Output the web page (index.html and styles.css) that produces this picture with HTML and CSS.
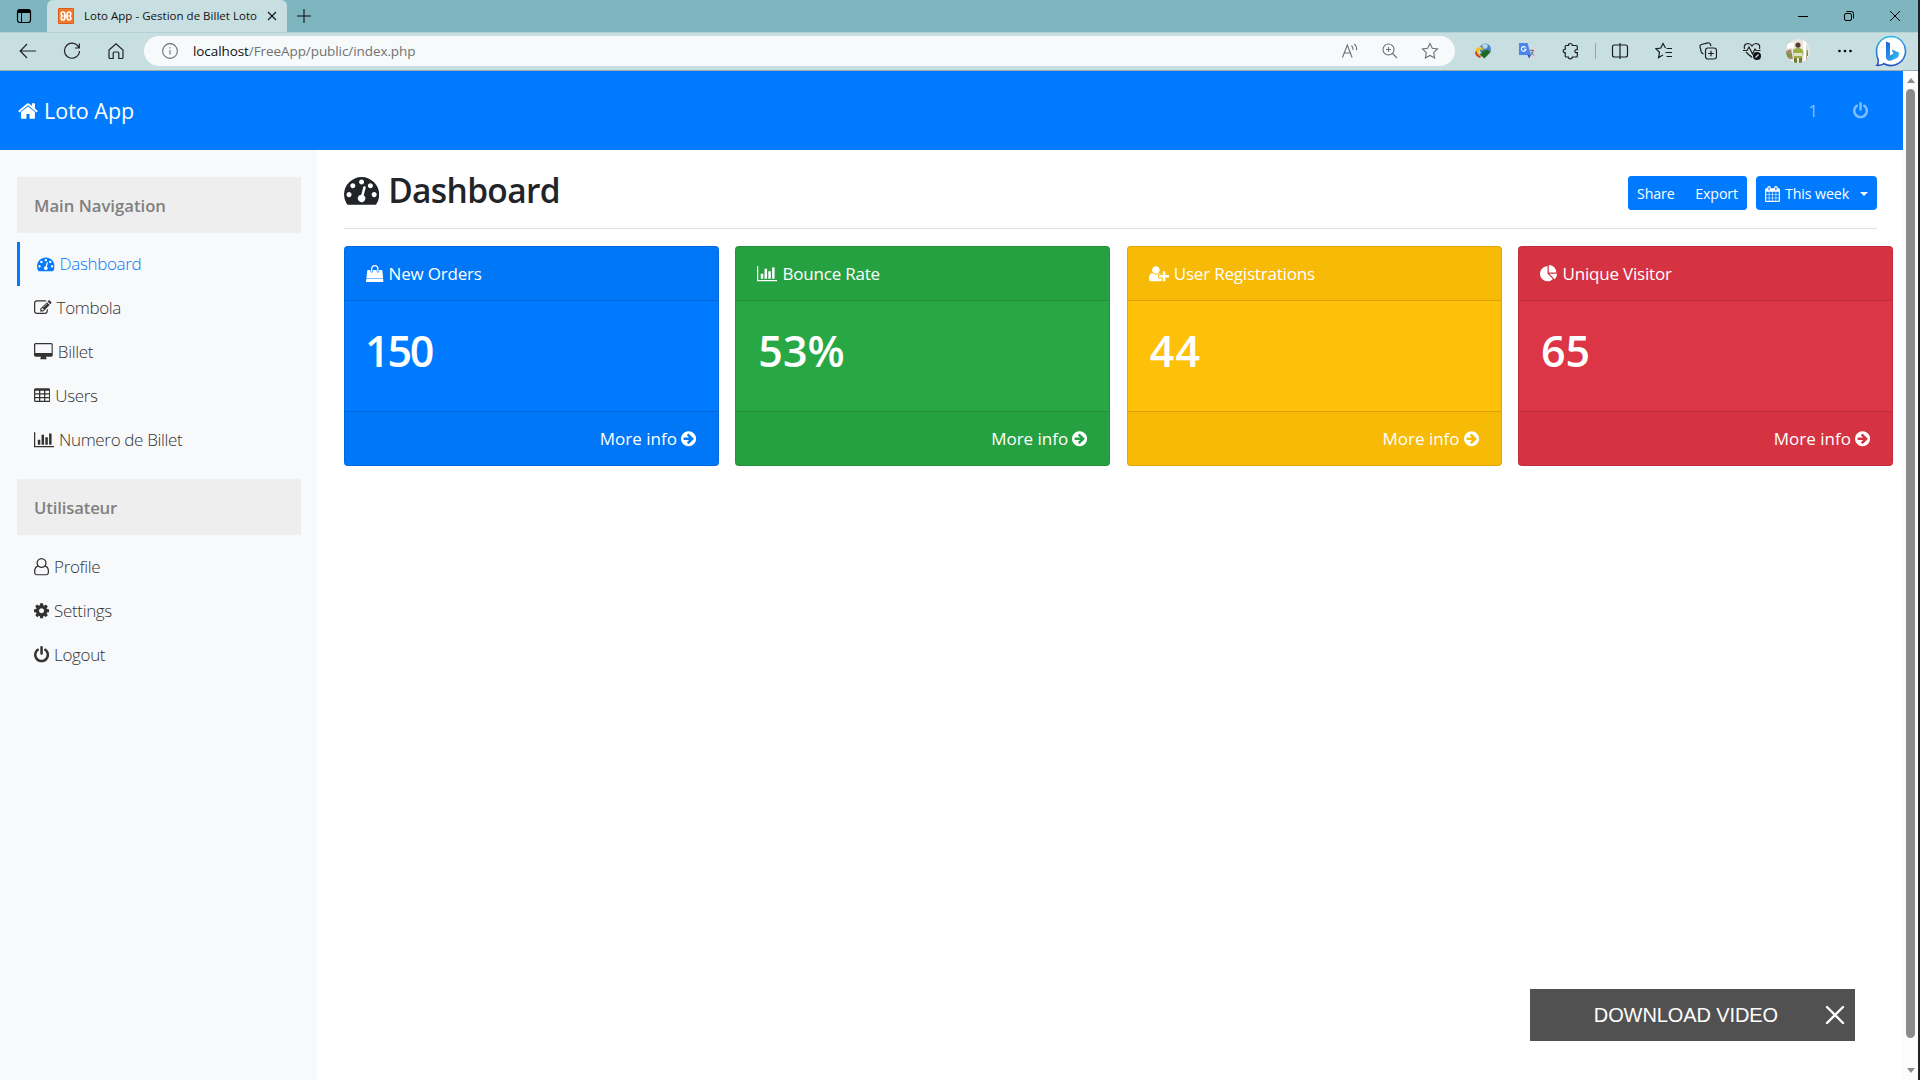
FILE: index.html
```html
<!DOCTYPE html>
<html lang="fr">
<head>
<meta charset="utf-8">
<title>Loto App - Gestion de Billet Loto</title>
<link rel="stylesheet" href="styles.css">
</head>
<body>
<svg class="sprite" aria-hidden="true">
  <symbol id="home" viewBox="64 0 1664 1792"><path d="M1472 992v480q0 26-19 45t-45 19h-384v-384h-256v384h-384q-26 0-45-19t-19-45v-480q0-1 .5-3t.5-3l575-474 575 474q1 2 1 6zm223-69l-62 74q-8 9-21 11h-3q-13 0-21-7l-692-577-692 577q-12 8-24 7-13-2-21-11l-62-74q-8-10-7-23.5t11-21.5l719-599q32-26 76-26t76 26l244 204v-195q0-14 9-23t23-9h192q14 0 23 9t9 23v408l219 182q10 8 11 21.500t-7 23.500z"/></symbol>
  <symbol id="gauge" viewBox="0 0 1792 1792"><path d="M384 1152q0-53-37.500-90.500t-90.500-37.500-90.500 37.500-37.500 90.500 37.500 90.500 90.500 37.500 90.500-37.500 37.500-90.500zm192-448q0-53-37.500-90.500t-90.500-37.500-90.500 37.500-37.500 90.500 37.500 90.500 90.500 37.500 90.500-37.500 37.500-90.500zm428 481l101-382q6-26-7.500-48.500t-38.500-29.500-48 6.500-30 39.500l-101 382q-60 5-107 43.500t-63 98.500q-20 77 20 146t117 89 146-20 89-117q16-60-6-117t-72-91zm660-33q0-53-37.500-90.500t-90.500-37.500-90.500 37.500-37.500 90.500 37.500 90.500 90.500 37.500 90.500-37.500 37.500-90.500zm-640-640q0-53-37.500-90.500t-90.500-37.500-90.500 37.500-37.500 90.500 37.500 90.500 90.500 37.500 90.500-37.500 37.500-90.500zm448 192q0-53-37.500-90.500t-90.500-37.500-90.500 37.500-37.500 90.500 37.500 90.500 90.500 37.500 90.500-37.500 37.500-90.500zm320 448q0 261-141 483-19 29-54 29h-1402q-35 0-54-29-141-221-141-483 0-182 71-348t191-286 286-191 348-71 348 71 286 191 191 286 71 348z"/></symbol>
  <symbol id="edit" viewBox="0 0 1792 1792"><path d="M888 1184l116-116-152-152-116 116v56h96v96h56zm440-720q-16-16-33 1l-350 350q-17 17-1 33t33-1l350-350q17-17 1-33zm80 594v190q0 119-84.500 203.500t-203.500 84.500h-832q-119 0-203.500-84.500t-84.500-203.500v-832q0-119 84.500-203.500t203.500-84.500h832q63 0 117 25 15 7 18 23 3 17-9 29l-49 49q-14 14-32 8-23-6-45-6h-832q-66 0-113 47t-47 113v832q0 66 47 113t113 47h832q66 0 113-47t47-113v-126q0-13 9-22l64-64q15-15 35-7t20 29zm-96-738l288 288-672 672h-288v-288zm444 132l-92 92-288-288 92-92q28-28 68-28t68 28l152 152q28 28 28 68t-28 68z"/></symbol>
  <symbol id="desktop" viewBox="0 0 1920 1792"><path d="M1792 992v-832q0-13-9.500-22.500t-22.500-9.500h-1600q-13 0-22.500 9.500t-9.500 22.500v832q0 13 9.500 22.500t22.500 9.500h1600q13 0 22.500-9.500t9.500-22.500zm128-832v1088q0 66-47 113t-113 47h-544q0 37 16 77.500t32 71 16 43.500q0 26-19 45t-45 19h-512q-26 0-45-19t-19-45q0-14 16-44t32-70 16-78h-544q-66 0-113-47t-47-113v-1088q0-66 47-113t113-47h1600q66 0 113 47t47 113z"/></symbol>
  <symbol id="table" viewBox="64 0 1664 1792"><path d="M224 128h1344q160 0 160 160v1088q0 160-160 160H224q-160 0-160-160V288q0-160 160-160zM192 384v256h384V384zm512 0v256h384V384zm512 0v256h384V384zM192 768v256h384V768zm512 0v256h384V768zm512 0v256h384V768zM192 1152v256h384v-256zm512 0v256h384v-256zm512 0v256h384v-256z"/></symbol>
  <symbol id="chart" viewBox="0 0 2048 1792"><path d="M640 896v512h-256v-512h256zm384-512v1024h-256v-1024h256zm1024 1152v128h-2048v-1536h128v1408h1920zm-640-896v768h-256v-768h256zm384-384v1152h-256v-1152h256z"/></symbol>
  <symbol id="user" viewBox="0 0 1536 1792"><path d="M1201 784q47 14 89.500 38t89 73 79.500 115.500 55 172 22 236.500q0 154-100 263.500t-241 109.500h-854q-141 0-241-109.500t-100-263.500q0-131 22-236.500t55-172 79.500-115.500 89-73 89.500-38q-79-125-79-272 0-104 40.500-198.500t109.500-163.500 163.500-109.500 198.500-40.500 198.500 40.500 163.500 109.500 109.500 163.500 40.500 198.500q0 147-79 272zm-433-656q-159 0-271.500 112.500t-112.500 271.500 112.500 271.500 271.500 112.500 271.500-112.500 112.500-271.500-112.500-271.500-271.500-112.500zm427 1536q88 0 150.500-71.500t62.500-173.500q0-239-78.500-377t-225.500-145q-145 127-336 127t-336-127q-147 7-225.500 145t-78.500 377q0 102 62.500 173.500t150.500 71.500h854z"/></symbol>
  <symbol id="cog" viewBox="128 0 1536 1792"><path d="M1152 896q0-106-75-181t-181-75-181 75-75 181 75 181 181 75 181-75 75-181zm512-109v222q0 12-8 23t-20 13l-185 28q-19 54-39 91 35 50 107 138 10 12 10 25t-9 23q-27 37-99 108t-94 71q-12 0-26-9l-138-108q-44 23-91 38-16 136-29 186-7 28-36 28h-222q-14 0-24.500-8.500t-11.500-21.500l-28-184q-49-16-90-37l-141 107q-10 9-25 9-14 0-25-11-126-114-165-168-7-10-7-23 0-12 8-23 15-21 51-66.500t54-70.500q-27-50-41-99l-183-27q-13-2-21-12.500t-8-23.500v-222q0-12 8-23t19-13l186-28q14-46 39-92-40-57-107-138-10-12-10-24 0-10 9-23 26-36 98.500-107.500t94.500-71.500q13 0 26 10l138 107q44-23 91-38 16-136 29-186 7-28 36-28h222q14 0 24.500 8.500t11.500 21.500l28 184q49 16 90 37l142-107q9-9 24-9 13 0 25 10 129 119 165 170 7 8 7 22 0 12-8 23-15 21-51 66.500t-54 70.500q26 50 41 98l183 28q13 2 21 12.500t8 23.500z"/></symbol>
  <symbol id="power" viewBox="128 0 1536 1792"><path d="M1664 896q0 156-61 298t-164 245-245 164-298 61-298-61-245-164-164-245-61-298q0-182 80.500-343t226.500-270q43-32 95.500-25t83.500 50q32 42 24.500 94.500t-49.500 84.500q-98 74-151.500 181t-53.500 228q0 104 40.500 198.500t109.500 163.500 163.500 109.500 198.500 40.500 198.500-40.500 163.500-109.500 109.500-163.500 40.500-198.500q0-121-53.500-228t-151.500-181q-42-32-49.500-84.500t24.500-94.500q31-43 84-50t95 25q146 109 226.500 270t80.500 343zm-640-768v640q0 52-38 90t-90 38-90-38-38-90v-640q0-52 38-90t90-38 90 38 38 90z"/></symbol>
  <symbol id="bag" viewBox="0 0 1792 1792"><path d="M1757 1408l35 313q3 28-16 50-19 21-48 21h-1664q-29 0-48-21-19-22-16-50l35-313h1722zm-93-839l86 775h-1708l86-775q3-24 21-40.500t43-16.500h256v128q0 53 37.500 90.500t90.500 37.500 90.500-37.500 37.500-90.500v-128h384v128q0 53 37.500 90.500t90.500 37.500 90.500-37.500 37.500-90.500v-128h256q25 0 43 16.500t21 40.500zm-384-185v256q0 26-19 45t-45 19-45-19-19-45v-256q0-106-75-181t-181-75-181 75-75 181v256q0 26-19 45t-45 19-45-19-19-45v-256q0-159 112.500-271.500t271.500-112.500 271.500 112.500 112.500 271.500z"/></symbol>
  <symbol id="user-plus" viewBox="0 0 2048 1792"><path d="M704 896q-159 0-271.500-112.500t-112.500-271.500 112.500-271.500 271.500-112.500 271.500 112.500 112.500 271.500-112.500 271.500-271.500 112.500zm960 128h352q13 0 22.500 9.500t9.500 22.500v192q0 13-9.500 22.500t-22.500 9.500h-352v352q0 13-9.500 22.500t-22.500 9.500h-192q-13 0-22.500-9.500t-9.500-22.500v-352h-352q-13 0-22.500-9.500t-9.500-22.500v-192q0-13 9.500-22.500t22.500-9.500h352v-352q0-13 9.500-22.500t22.500-9.500h192q13 0 22.500 9.500t9.500 22.500v352zm-736 224q0 52 38 90t90 38h256v238q-68 50-171 50h-874q-121 0-194-69t-73-190q0-53 3.500-103.500t14-109 26.500-108.500 43-97.500 62-81 85.500-53.500 111.500-20q19 0 39 17 79 61 154.500 91.500t164.500 30.500 164.500-30.500 154.500-91.500q20-17 39-17 132 0 217 96h-223q-52 0-90 38t-38 90v192z"/></symbol>
  <symbol id="pie" viewBox="0 0 1792 1792"><path d="M768 890l546 546q-106 108-247.500 168t-298.500 60q-209 0-385.500-103t-279.500-279.500-103-385.500 103-385.500 279.500-279.500 385.500-103v762zm187 6h773q0 157-60 298.500t-168 247.500zm709-128h-768v-768q209 0 385.500 103t279.500 279.500 103 385.500z"/></symbol>
  <symbol id="arrow" viewBox="128 0 1536 1792"><path d="M1413 896q0-27-18-45l-91-91-362-362q-18-18-45-18t-45 18l-91 91q-18 18-18 45t18 45l189 189h-502q-26 0-45 19t-19 45v128q0 26 19 45t45 19h502l-189 189q-18 18-18 45t18 45l91 91q18 18 45 18t45-18l362-362 91-91q18-18 18-45zm251 0q0 209-103 385.500t-279.500 279.500-385.500 103-385.500-103-279.500-279.500-103-385.500 103-385.500 279.500-279.500 385.500-103 385.500 103 279.500 279.500 103 385.500z"/></symbol>
  <symbol id="calendar" viewBox="64 0 1664 1792"><path d="M192 1664h288v-288h-288v288zm352 0h320v-288h-320v288zm-352-352h288v-320h-288v320zm352 0h320v-320h-320v320zm-352-384h288v-288h-288v288zm736 736h320v-288h-320v288zm-384-736h320v-288h-320v288zm768 736h288v-288h-288v288zm-384-352h320v-320h-320v320zm-352-864v-288q0-13-9.500-22.500t-22.500-9.500h-64q-13 0-22.500 9.500t-9.500 22.500v288q0 13 9.500 22.500t22.500 9.500h64q13 0 22.500-9.500t9.500-22.500zm736 864h288v-320h-288v320zm-384-384h320v-288h-320v288zm384 0h288v-288h-288v288zm32-480v-288q0-13-9.500-22.500t-22.500-9.500h-64q-13 0-22.500 9.500t-9.500 22.500v288q0 13 9.500 22.500t22.500 9.500h64q13 0 22.500-9.500t9.500-22.500zm384-64v1280q0 52-38 90t-90 38h-1408q-52 0-90-38t-38-90v-1280q0-52 38-90t90-38h128v-96q0-66 47-113t113-47h64q66 0 113 47t47 113v96h384v-96q0-66 47-113t113-47h64q66 0 113 47t47 113v96h128q52 0 90 38t38 90z"/></symbol>
</svg>

<div class="window">
  <header class="tabbar">
    <svg class="tab-menu" viewBox="0 0 16 16"><rect x="1.500" y="1.500" width="13" height="13" rx="2.500" fill="none" stroke="#000" stroke-width="1.200"/><path d="M1.500 5V3.500a2 2 0 0 1 2-2h9a2 2 0 0 1 2 2V5z"/><path d="M5.500 5v9.500" stroke="#000"/></svg>
    <div class="tab">
      <svg class="favicon" viewBox="0 0 16 16"><rect width="16" height="16" rx="1" fill="#d9601c"/><rect x="1" y="1" width="14" height="14" fill="#f47a2a"/><path d="M6.800 6.200Q6.800 4 4.900 4T3.200 6q0 1.200 1.200 2-1.200.8-1.200 2 0 2 1.700 2t1.900-2.200V8h2.400v1.800q0 2.200 1.900 2.200t1.700-2q0-1.200-1.200-2 1.200-.8 1.200-2 0-2-1.700-2T9.200 6.200V8H6.800z" fill="none" stroke="#fff" stroke-width="1.700"/></svg>
      <span class="tab-title">Loto App - Gestion de Billet Loto</span>
      <svg class="tab-close" viewBox="0 0 10 10"><path d="M1 1l8 8M9 1l-8 8" stroke="#111" stroke-width="1.100"/></svg>
    </div>
    <svg class="tab-new" viewBox="0 0 14 14"><path d="M7 0v14M0 7h14" stroke="#111" stroke-width="1.100"/></svg>
    <div class="window-buttons">
      <svg viewBox="0 0 12 12"><path d="M1 6.500h10" stroke="#000"/></svg>
      <svg viewBox="0 0 12 12" fill="none" stroke="#000"><rect x="1.500" y="3.500" width="7" height="7" rx="1.500"/><path d="M3.500 1.500h5a2 2 0 0 1 2 2v5"/></svg>
      <svg viewBox="0 0 12 12"><path d="M1 1l10 10M11 1L1 11" stroke="#000"/></svg>
    </div>
  </header>

  <div class="toolbar">
    <div class="nav-buttons">
      <svg viewBox="0 0 18 18"><path d="M17 9H1.500M8 2L1.200 9 8 16"/></svg>
      <svg viewBox="0 0 18 18"><path d="M16 6A7.500 7.500 0 1 0 16.500 9M16.300 1.500V6H12"/></svg>
      <svg viewBox="0 0 18 18"><path d="M2 8l7-6.200L16 8v7.500q0 1-1 1h-3.200V11q0-1-1-1H7.200q-1 0-1 1v5.500H3q-1 0-1-1z"/></svg>
    </div>
    <div class="address">
      <svg class="info" viewBox="0 0 16 16"><circle cx="8" cy="8" r="7.400"/><path d="M8 7v4.500M8 4.200v1.300"/></svg>
      <span class="url"><span class="host">localhost</span>/FreeApp/public/index.php</span>
      <div class="address-actions">
        <svg viewBox="0 0 18 18"><path d="M1.500 15.500L6.300 3l4.800 12.500M3.200 11h6.200M10.500 3.500q1.700 1.500 1.500 4.500M13.300 1.800q2.600 2.200 2.300 6.400"/></svg>
        <svg viewBox="0 0 18 18"><circle cx="7.500" cy="7.500" r="5.500"/><path d="M11.500 11.500L16 16M7.500 5v5M5 7.500h5"/></svg>
        <svg viewBox="0 0 18 18"><path d="M9 1.500l2.300 4.800 5.200.7-3.800 3.600.9 5.300L9 13.400l-4.600 2.500.9-5.300L1.500 7l5.200-.7z"/></svg>
      </div>
    </div>
    <div class="extensions">
      <svg viewBox="0 0 18 18"><circle cx="11.300" cy="7.200" r="5.700" fill="#4f83c8"/><path d="M8 3q3-2 6 0l-1 3-3 1z" fill="#b9d7f2"/><path d="M8 5Q2 5 1 9t4 6l3-1Q4 13 4.500 10T9 8z" fill="#f0c419"/><path d="M1 10q0 4 5 6l1-1.500Q3 13 3 9.500z" fill="#d0392b"/><path d="M8 9.500l6-2 1 2h2l-6.500 7L5 12l3-.5z" fill="#1f6b24"/></svg>
      <svg viewBox="0 0 18 18"><path d="M8 5h9v11.500h-6z" fill="#d5d8dc"/><path d="M1 1h8.500L13 13H1z" fill="#4a86ea"/><path d="M9.500 13H13l-2 3.500z" fill="#2a56c6"/><path d="M7.500 5.500A2.300 2.300 0 1 0 8 7.200H6" fill="none" stroke="#fff" stroke-width="1.100"/><path d="M12 8.500h4M14 7.500v1M15.300 9q-.8 2.500-2.300 4M13 10l3 3.500" stroke="#687684" fill="none"/></svg>
      <svg class="line" viewBox="0 0 18 18"><path d="M6.500 3.500q-.2-2 1.800-2t2 2h4q1 0 1 1v3.200q-2.500-.2-2.500 1.500t2.500 1.500v3.300q0 1-1 1h-4q0 1.800-2 1.800t-2-1.800H4.200q-1 0-1-1v-3.300Q1.200 10.700 1.200 9t2-1.500v-3q0-1 1-1z"/></svg>
      <i class="divider"></i>
      <svg class="line" viewBox="0 0 18 18"><path d="M7 3H3.500Q1.500 3 1.500 5v8q0 2 2 2H7M11 3h3.500q2 0 2 2v8q0 2-2 2H11M9 1v16M7 3h4M7 15h4"/></svg>
      <svg class="line" viewBox="0 0 18 18"><path d="M10.500 6L8 1.500 5.800 6l-5 .8 3.700 3.500-.9 5.200L8 13M11.500 6.500H17M10.500 10.500H17M11.500 14.500H17"/></svg>
      <svg class="line" viewBox="0 0 18 18"><rect x="6.500" y="6" width="11" height="11" rx="2.500"/><path d="M12 8.700v5.600M9.200 11.500h5.600M4.500 12Q2.800 11.600 2.300 10L1 4.800Q.7 3 2.400 2.500L9 .8q1.700-.3 2.300 1.200L12 4"/></svg>
      <svg class="line" viewBox="0 0 18 18"><path d="M9 15.500L7 13.500M1.500 7Q.3 2 4.800 1.500 7.500 1.500 9 4q1.500-2.500 4.200-2.500Q17.700 2 16.500 7M0 8.500h4L6 5l3.500 7L12 7l1 1.500h4.500M3 10l4 4"/><circle cx="14" cy="14" r="4" fill="#111" stroke="none"/><path d="M12.500 15.500l3-3" stroke="#c8dfe2"/></svg>
      <svg class="avatar" viewBox="0 0 24 24"><defs><clipPath id="face"><circle cx="12" cy="12" r="12"/></clipPath></defs><g clip-path="url(#face)"><path fill="#e9e5df" d="M0 0h24v24H0z"/><path fill="#a58b6c" d="M0 12l5-2 2 10H0zM18 7l3-2v16h-2z"/><path fill="#7d9148" d="M0 14l6 1v3H1zM17 13l5-2v6h-4z"/><path fill="#fff" d="M17 0h4l-1 24h-2zM1 4h7v5H1z"/><path fill="#9caf43" d="M7 11l5-3 5 3-1 8H8z"/><circle cx="12" cy="6" r="2.600" fill="#5b3a2b"/><path fill="#dfe4c8" d="M8 14h8v3H8z"/><path fill="#6f7a3d" d="M8 19h3v5H8zM13 19h3v5h-3z"/></g></svg>
      <svg viewBox="0 0 18 18"><circle cx="3.500" cy="9" r="1.300"/><circle cx="9" cy="9" r="1.300"/><circle cx="14.500" cy="9" r="1.300"/></svg>
      <svg class="bing" viewBox="0 0 32 32"><defs><linearGradient id="bing-edge" x2="0" y2="1"><stop stop-color="#31b6ee"/><stop offset="1" stop-color="#2650c0"/></linearGradient><linearGradient id="bing-mark" x2="1" y2="1"><stop stop-color="#1b5fe0"/><stop offset="1" stop-color="#35c5ec"/></linearGradient></defs><path d="M16 1.500A14.500 14.500 0 1 1 9 28.700q-3 2-7 1.600 1.500-1.500 1.200-5.500Q1.500 21 1.500 16A14.500 14.500 0 0 1 16 1.500z" fill="#fff" stroke="url(#bing-edge)" stroke-width="1.600"/><path d="M11 6.500l4 1.500v12.500l3.500-2-2-4 7 2.700q1.500 4-2 6L15 26q-4-.5-4-4z" fill="url(#bing-mark)"/></svg>
    </div>
  </div>

  <div class="viewport">
    <div class="page">
      <nav class="navbar">
        <a class="brand"><svg class="fa w-home"><use href="#home"/></svg><span class="t">Loto App</span></a>
        <div class="navbar-right"><span class="t">1</span><svg class="fa w-power"><use href="#power"/></svg></div>
      </nav>
      <div class="columns">
        <aside class="sidebar">
          <h6>Main Navigation</h6>
          <ul>
            <li class="active"><svg class="fa w-gauge"><use href="#gauge"/></svg><span class="t">Dashboard</span></li>
            <li><svg class="fa w-gauge"><use href="#edit"/></svg><span class="t">Tombola</span></li>
            <li><svg class="fa w-desktop"><use href="#desktop"/></svg><span class="t">Billet</span></li>
            <li><svg class="fa w-home"><use href="#table"/></svg><span class="t">Users</span></li>
            <li><svg class="fa w-chart"><use href="#chart"/></svg><span class="t">Numero de Billet</span></li>
          </ul>
          <h6 class="second">Utilisateur</h6>
          <ul>
            <li><svg class="fa w-power"><use href="#user"/></svg><span class="t">Profile</span></li>
            <li><svg class="fa w-power"><use href="#cog"/></svg><span class="t">Settings</span></li>
            <li><svg class="fa w-power"><use href="#power"/></svg><span class="t">Logout</span></li>
          </ul>
        </aside>
        <main class="content">
          <div class="heading">
            <h1><svg class="fa"><use href="#gauge"/></svg><span class="t">Dashboard</span></h1>
            <div class="actions">
              <div class="group"><button>Share</button><button>Export</button></div>
              <button class="week"><svg class="fa"><use href="#calendar"/></svg><span class="t">This week</span><i class="caret"></i></button>
            </div>
          </div>
          <div class="cards">
            <section class="card blue"><header><svg class="fa w-gauge"><use href="#bag"/></svg><span class="t">New Orders</span></header><div class="value value-narrow">150</div><footer><span class="t">More info</span><svg class="fa w-power"><use href="#arrow"/></svg></footer></section>
            <section class="card green"><header><svg class="fa w-chart"><use href="#chart"/></svg><span class="t">Bounce Rate</span></header><div class="value">53%</div><footer><span class="t">More info</span><svg class="fa w-power"><use href="#arrow"/></svg></footer></section>
            <section class="card yellow"><header><svg class="fa w-chart"><use href="#user-plus"/></svg><span class="t">User Registrations</span></header><div class="value value-wide">44</div><footer><span class="t">More info</span><svg class="fa w-power"><use href="#arrow"/></svg></footer></section>
            <section class="card red"><header><svg class="fa w-gauge"><use href="#pie"/></svg><span class="t">Unique Visitor</span></header><div class="value">65</div><footer><span class="t">More info</span><svg class="fa w-power"><use href="#arrow"/></svg></footer></section>
          </div>
        </main>
      </div>
      <div class="download"><span class="t">DOWNLOAD VIDEO</span><svg viewBox="0 0 20 20"><path d="M2 2l16 16M18 2L2 18" stroke="#fff" stroke-width="2.400" stroke-linecap="round"/></svg></div>
    </div>
    <div class="scrollbar"><i class="up"></i><i class="thumb"></i><i class="down"></i></div>
  </div>
</div>
</body>
</html>
```
FILE: styles.css
```css
* { box-sizing: border-box; }
body { margin: 0; font-family: "Open Sans", "Noto Sans", sans-serif; color: #212529; }
h1, h6, ul { margin: 0; padding: 0; font-weight: inherit; }
ul { list-style: none; }
.sprite { display: none; }
.window { width: 1920px; height: 1080px; display: flex; flex-direction: column; border-right: 2px solid #1d2426; overflow: hidden; }
.t, .tab-title, .url { white-space: nowrap; }

/* Browser frame */
.tabbar { height: 32px; flex: none; display: flex; align-items: center; background: #7eb5be; }
.tab-menu { width: 16px; height: 16px; margin: 0 15px 0 16px; }
.tab { width: 240px; height: 32px; display: flex; align-items: center; padding-left: 11px; background: #c8dfe2; border-radius: 6px 6px 0 0; }
.favicon { width: 16px; height: 16px; }
.tab-title { width: 173px; margin: -2px 0 0 10px; font-size: 11.500px; letter-spacing: .02px; color: #111; }
.tab-close { width: 10px; height: 10px; margin-left: 10px; }
.tab-new { width: 14px; height: 14px; margin-left: 10px; }
.window-buttons { margin-left: auto; margin-right: 17px; display: flex; gap: 34px; }
.window-buttons svg { width: 12px; height: 12px; }
.toolbar { height: 39px; flex: none; display: flex; align-items: center; padding-bottom: 1px; background: #c8dfe2; border-top: 1px solid #b4d0d5; border-bottom: 1px solid #98acaf; }
.nav-buttons { display: flex; gap: 26px; padding: 0 19px; }
.nav-buttons svg { width: 18px; height: 18px; fill: none; stroke: #222; stroke-width: 1.200; }
.address { width: 1311px; height: 30px; display: flex; align-items: center; padding: 0 16px 0 18px; border-radius: 15px; background: #f6fafa; }
.address svg { fill: none; stroke: #6c7071; stroke-width: 1.100; }
.info { width: 16px; height: 16px; }
.url { margin: -1px 0 0 15px; font-size: 13.500px; letter-spacing: -.08px; color: #707273; }
.host { color: #111; }
.address-actions { margin-left: auto; display: flex; gap: 22px; }
.address-actions svg { width: 18px; height: 18px; }
.extensions { flex: 1; display: flex; align-items: center; padding-left: 19px; gap: 26px; }
.extensions svg { width: 18px; height: 18px; flex: none; }
.extensions .line { fill: none; stroke: #1c1f20; stroke-width: 1.200; }
.divider { width: 1px; height: 16px; margin: 0 -11px; background: #95a7aa; }
.extensions .avatar { width: 24px; height: 24px; margin-left: -1px; }
.extensions .bing { width: 32px; height: 32px; margin-left: -5px; }

/* Page */
.viewport { flex: 1; display: flex; background: #fff; min-height: 0; }
.page { width: 1903px; position: relative; display: flex; flex-direction: column; }
.fa { height: 17.600px; width: 17.600px; flex: none; fill: currentColor; fill-rule: evenodd; }
.w-home { width: 16.350px; }
.w-power { width: 15.100px; }
.w-desktop { width: 18.860px; }
.w-chart { width: 20.110px; }
.navbar { height: 79px; flex: none; display: flex; justify-content: space-between; align-items: center; padding: 0 35px 0 18px; background: #007bff; color: #fff; }
.brand { display: flex; align-items: center; gap: 6px; font-size: 21.500px; }
.brand .fa { width: 20px; height: 22px; }
.navbar-right { display: flex; align-items: center; gap: 35px; font-size: 17px; color: #80bdff; }
.columns { flex: 1; display: flex; }
.sidebar { width: 317px; padding: 27px 16px 0 17px; background: #f8f9fb; }
.sidebar h6 { height: 56px; display: flex; align-items: center; padding-left: 17px; margin-bottom: 9px; background: #eee; color: #808080; font-size: 16.700px; font-weight: 600; }
.sidebar .second { margin-bottom: 10px; padding-top: 1px; letter-spacing: -.15px; }
.sidebar ul { margin-bottom: 17px; }
.sidebar li { height: 44px; display: flex; align-items: center; gap: 5px; padding-left: 17px; font-size: 17px; font-weight: 300; letter-spacing: -.35px; color: #333; }
.sidebar .t { margin-bottom: 2px; }
.sidebar .active { border-left: 3px solid #007bff; color: #007bff; }
.content { flex: 1; padding: 0 10px 0 27px; }
.heading { height: 79px; margin-right: 16px; display: flex; justify-content: space-between; border-bottom: 1px solid #dee2e6; }
h1 { display: flex; align-items: center; gap: 9px; height: 79px; font-size: 33.500px; font-weight: 600; letter-spacing: -.65px; }
h1 .fa { width: 35.200px; height: 35.200px; }
.actions { display: flex; align-items: flex-start; gap: 9px; padding-top: 26px; }
.actions button { height: 34px; padding: 1px 9px 0; display: flex; align-items: center; font: 14.200px "Open Sans", sans-serif; letter-spacing: -.1px; color: #fff; background: #007bff; border: 0; }
.group { width: 119px; display: flex; justify-content: space-between; border-radius: 4px; background: #007bff; overflow: hidden; }
.actions .week { width: 121px; border-radius: 4px; }
.week .fa { width: 15px; height: 16px; margin-right: 5px; }
.caret { margin-left: auto; border: 4px solid transparent; border-top-color: #fff; border-bottom: 0; }
.cards { margin-top: 17px; display: grid; grid-template-columns: repeat(4, 375px); justify-content: space-between; }
.card { height: 220px; display: flex; flex-direction: column; border: 1px solid rgba(0,0,0,.125); border-radius: 4px; color: #fff; font-size: 17px; }
.card header, .card footer { height: 54px; display: flex; align-items: center; gap: 5px; padding: 0 21px; background: rgba(0,0,0,.03); }
.card header { border-bottom: 1px solid rgba(0,0,0,.125); letter-spacing: -.2px; }
.card footer { border-top: 1px solid rgba(0,0,0,.125); justify-content: flex-end; padding-right: 22px; gap: 4px; }
.value { flex: 1; padding: 20px 22px; font-size: 43px; line-height: 60px; font-weight: 600; }
.value-narrow { padding-left: 20px; letter-spacing: -2.200px; }
.value-wide { letter-spacing: 1.200px; }
.blue { background: #007bff; }
.green { background: #28a745; }
.yellow { background: #ffc107; }
.red { background: #dc3545; }
.download { position: absolute; right: 48px; bottom: 39px; width: 325px; height: 52px; display: flex; align-items: center; justify-content: flex-end; padding-right: 10px; gap: 47px; background: #515151; color: #fff; font: 20px "Liberation Sans", Arial, sans-serif; letter-spacing: -.1px; }
.download svg { width: 20px; height: 20px; }
.scrollbar { flex: 1; display: flex; flex-direction: column; align-items: center; padding: 7px 0; background: #fcfcfc; }
.up, .down { border: 4px solid transparent; }
.up { border-top: 0; border-bottom: 5px solid #8b8b8b; }
.down { border-bottom: 0; border-top: 5px solid #8b8b8b; }
.thumb { flex: 1; width: 9px; margin: 6px 0 30px; border-radius: 5px; background: #8b8b8b; }
```
